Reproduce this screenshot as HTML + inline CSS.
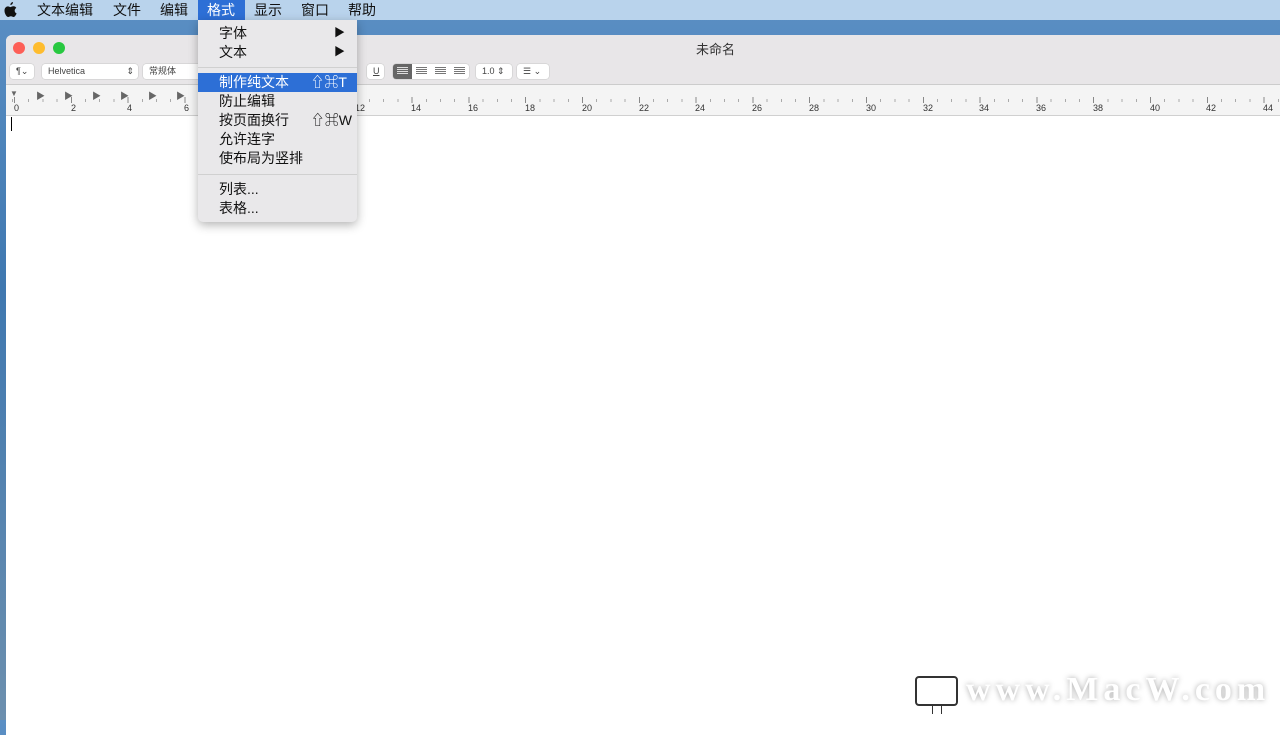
<!DOCTYPE html><html><head><meta charset="utf-8"><style>
*{margin:0;padding:0;box-sizing:border-box}
body{width:1280px;height:720px;overflow:hidden;position:relative;font-family:"Liberation Sans","Noto Sans CJK SC",sans-serif;background:linear-gradient(#5b8fc4,#3f78b0 40%,#6c8fae);}
.mb{position:absolute;top:0;left:0;width:1280px;height:20px;background:#b9d3ec;font-size:14px;color:#111}
.mb span{position:absolute;top:0;line-height:20px}
.win{position:absolute;left:6px;top:35px;width:1280px;height:700px;background:#fff;border-radius:6px 0 0 0;overflow:hidden}
.tb{height:50px;background:#e8e6e8;border-bottom:1px solid #ccc}
.ruler{position:absolute;top:50px;left:0;right:0;height:31px;background:#f4f4f4;border-bottom:1px solid #d0d0d0}
.dot{position:absolute;top:7px;width:12px;height:12px;border-radius:50%}
.ctl{position:absolute;top:29px;height:15px;background:#fff;border-radius:3px;box-shadow:0 0 0 .5px #c8c8c8;font-size:9px;color:#444;line-height:15px;padding-left:6px}
.rn{position:absolute;top:18px;font-size:9px;color:#333}
.menu{position:absolute;left:198px;top:20px;width:159px;height:202px;background:#e9e8ea;border-radius:0 0 5px 5px;box-shadow:0 3px 10px rgba(0,0,0,.3);font-size:14px;color:#111}
.mi{position:absolute;left:0;width:159px;height:19px;line-height:19px;padding-left:21px}
.sep{position:absolute;left:0;right:0;height:1px;background:#d0d0d0}
.al{position:absolute;top:3px;width:19px;height:9px}
.al i{display:block;height:1px;background:#777;margin:0 4px 1px}
</style></head><body>
<div class="mb">
<svg style="position:absolute;left:4px;top:2px" width="13" height="16" viewBox="0 0 13 16"><path d="M9 0c0 1.5-1 3-2.6 3C6.3 1.6 7.4.2 9 0zM12.6 11.4c-.6 1.5-1.7 3.6-3 3.6-1.1 0-1.4-.7-2.7-.7s-1.7.7-2.7.7C2.7 15 .5 11.8.5 8.6c0-2.7 1.8-4.2 3.4-4.2 1.1 0 2 .7 2.6.7.6 0 1.6-.8 2.9-.8.5 0 2 .1 2.9 1.6-2.4 1.4-2 4.7.3 5.5z" fill="#111"/></svg>
<span style="left:37px">文本编辑</span><span style="left:113px">文件</span><span style="left:160px">编辑</span>
<span style="left:198px;width:47px;height:20px;background:#2d6fd6;color:#fff;padding-left:9px">格式</span>
<span style="left:254px">显示</span><span style="left:301px">窗口</span><span style="left:348px">帮助</span>
</div>
<div class="win">
<div class="tb">
<div class="dot" style="left:7px;background:#fd5f57"></div><div class="dot" style="left:27px;background:#febc2e"></div><div class="dot" style="left:47px;background:#28c840"></div>
<div style="position:absolute;left:690px;top:4px;font-size:13px;color:#333">未命名</div>
<div class="ctl" style="left:4px;width:24px;top:29px">¶⌄</div>
<div class="ctl" style="left:36px;width:96px">Helvetica<span style="position:absolute;right:4px">⇕</span></div>
<div class="ctl" style="left:137px;width:60px">常规体</div>
<div class="ctl" style="left:361px;width:17px;text-decoration:underline">U</div>
<div class="ctl" style="left:387px;width:76px;padding:0">
<div class="al" style="left:0;top:0;height:15px;background:#666;border-radius:3px 0 0 3px;padding-top:3px"><i style="background:#ddd"></i><i style="background:#ddd"></i><i style="background:#ddd"></i><i style="background:#ddd"></i></div>
<div class="al" style="left:19px"><i></i><i></i><i></i><i></i></div>
<div class="al" style="left:38px"><i></i><i></i><i></i><i></i></div>
<div class="al" style="left:57px"><i></i><i></i><i></i><i></i></div>
</div>
<div class="ctl" style="left:470px;width:36px">1.0 ⇕</div>
<div class="ctl" style="left:511px;width:32px">☰ ⌄</div>
</div>
<div class="ruler">
<div style="position:absolute;left:0;right:0;top:14px;height:3px;background:repeating-linear-gradient(90deg,#aaa 0 1px,transparent 1px 14.2px);background-position:8px 0"></div>
<div style="position:absolute;left:0;right:0;top:12px;height:6px;background:repeating-linear-gradient(90deg,#888 0 1px,transparent 1px 56.8px);background-position:8px 0"></div>
<div style="position:absolute;left:4px;top:4px;font-size:8px;color:#666">▼</div>
<div style="position:absolute;left:30px;top:4px;font-size:9px;color:#666;letter-spacing:19px">▶▶▶▶▶▶▶</div>
<span class="rn" style="left:8px">0</span><span class="rn" style="left:65px">2</span><span class="rn" style="left:121px">4</span><span class="rn" style="left:178px">6</span><span class="rn" style="left:235px">8</span><span class="rn" style="left:292px">10</span><span class="rn" style="left:349px">12</span><span class="rn" style="left:405px">14</span><span class="rn" style="left:462px">16</span><span class="rn" style="left:519px">18</span><span class="rn" style="left:576px">20</span><span class="rn" style="left:633px">22</span><span class="rn" style="left:689px">24</span><span class="rn" style="left:746px">26</span><span class="rn" style="left:803px">28</span><span class="rn" style="left:860px">30</span><span class="rn" style="left:917px">32</span><span class="rn" style="left:973px">34</span><span class="rn" style="left:1030px">36</span><span class="rn" style="left:1087px">38</span><span class="rn" style="left:1144px">40</span><span class="rn" style="left:1200px">42</span><span class="rn" style="left:1257px">44</span>
</div>
<div style="position:absolute;left:5px;top:82px;width:1px;height:14px;background:#000"></div>
</div>
<div class="menu">
<div class="mi" style="top:4px">字体<span style="position:absolute;right:12px;font-size:11px">▶</span></div>
<div class="mi" style="top:23px">文本<span style="position:absolute;right:12px;font-size:11px">▶</span></div>
<div class="sep" style="top:47px"></div>
<div class="mi" style="top:53px;background:#2d6fd6;color:#fff">制作纯文本<span style="position:absolute;right:10px">⇧⌘T</span></div>
<div class="mi" style="top:72px">防止编辑</div>
<div class="mi" style="top:91px">按页面换行<span style="position:absolute;right:5px">⇧⌘W</span></div>
<div class="mi" style="top:110px">允许连字</div>
<div class="mi" style="top:129px">使布局为竖排</div>
<div class="sep" style="top:154px"></div>
<div class="mi" style="top:160px">列表...</div>
<div class="mi" style="top:179px">表格...</div>
</div>
<div style="position:absolute;left:915px;top:676px;width:43px;height:30px;border:2px solid #333;border-radius:4px;background:#fff"></div>
<div style="position:absolute;left:932px;top:706px;width:10px;height:8px;border-left:1px solid #333;border-right:1px solid #333"></div>
<div style="position:absolute;left:966px;top:671px;font-family:'Liberation Serif',serif;font-size:34px;font-weight:bold;color:#fff;text-shadow:0 0 6px #aaa;letter-spacing:5px">www.MacW.com</div>
</body></html>
